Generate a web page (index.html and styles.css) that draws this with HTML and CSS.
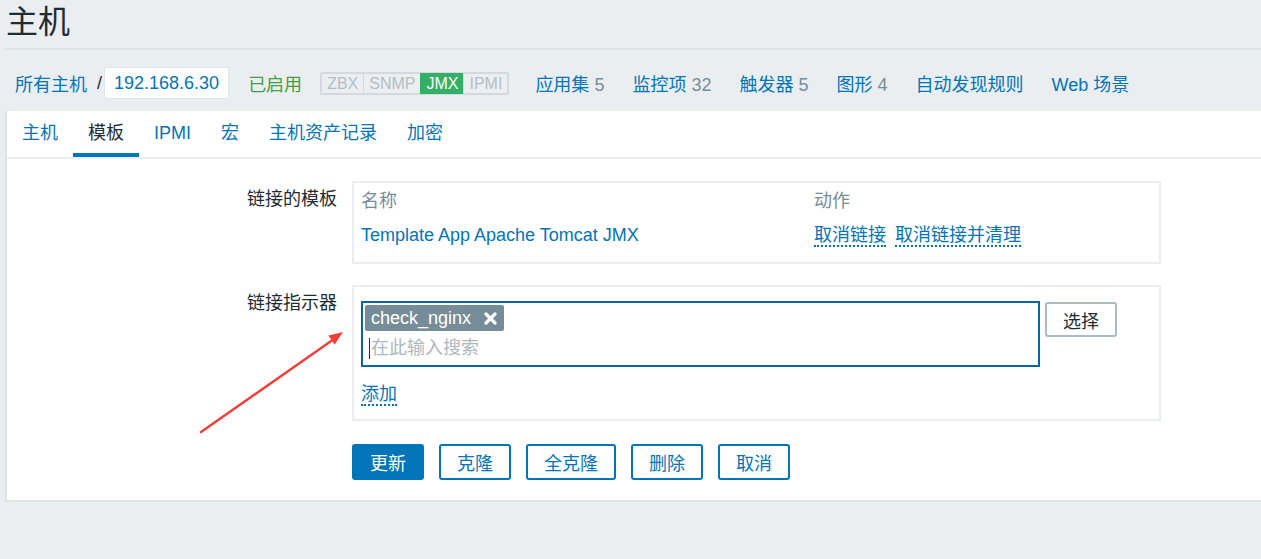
FILE: index.html
```html
<!DOCTYPE html>
<html lang="zh-CN">
<head>
<meta charset="utf-8">
<title>主机</title>
<link rel="stylesheet" href="styles.css">
</head>
<body>
<header class="page-header"><h1 class="title">主机</h1></header>
<nav class="crumbs">
  <a class="link">所有主机</a><span class="sep">/</span><span class="host-box">192.168.6.30</span>
  <span class="status-on">已启用</span>
  <span class="badges"><span class="badge">ZBX</span><span class="badge">SNMP</span><span class="badge badge-on">JMX</span><span class="badge">IPMI</span></span>
  <span class="nav-links">
    <a class="link">应用集 <span class="count">5</span></a>
    <a class="link">监控项 <span class="count">32</span></a>
    <a class="link">触发器 <span class="count">5</span></a>
    <a class="link">图形 <span class="count">4</span></a>
    <a class="link">自动发现规则</a>
    <a class="link">Web 场景</a>
  </span>
</nav>
<main class="panel">
  <ul class="tabs">
    <li class="tab">主机</li>
    <li class="tab tab-active">模板</li>
    <li class="tab">IPMI</li>
    <li class="tab">宏</li>
    <li class="tab">主机资产记录</li>
    <li class="tab">加密</li>
  </ul>
  <form class="form">
    <div class="form-row">
      <div class="form-label">链接的模板</div>
      <div class="field-box tpl-table">
        <div class="th">名称</div>
        <div class="th">动作</div>
        <div class="td"><a class="link">Template App Apache Tomcat JMX</a></div>
        <div class="td"><a class="link dotted">取消链接</a> <a class="link dotted link-next">取消链接并清理</a></div>
      </div>
    </div>
    <div class="form-row form-row-gap">
      <div class="form-label">链接指示器</div>
      <div class="field-box link-box">
        <div class="ms-row">
          <div class="multiselect">
            <span class="ms-tag">check_nginx<svg class="ms-x" width="13" height="13" viewBox="0 0 13 13"><path d="M2 2 L11 11 M11 2 L2 11" stroke="#fff" stroke-width="3.2" stroke-linecap="round"/></svg></span>
            <div class="ms-input"><span class="caret"></span>在此输入搜索</div>
          </div>
          <button type="button" class="btn-select">选择</button>
        </div>
        <div class="add-row"><a class="link dotted">添加</a></div>
      </div>
    </div>
    <div class="form-actions">
      <div></div>
      <div class="buttons">
        <button type="button" class="btn btn-primary">更新</button>
        <button type="button" class="btn">克隆</button>
        <button type="button" class="btn">全克隆</button>
        <button type="button" class="btn">删除</button>
        <button type="button" class="btn">取消</button>
      </div>
    </div>
  </form>
</main>
<svg class="annotation" width="1261" height="559" viewBox="0 0 1261 559">
  <line x1="201" y1="432" x2="334" y2="339" stroke="#f23d3a" stroke-width="2.4" stroke-linecap="round"/>
  <polygon points="343,332 334.6,344.4 328.4,335.6" fill="#f23d3a"/>
</svg>
</body>
</html>
```
FILE: styles.css
```css
html, body {
  margin: 0;
  padding: 0;
}
body {
  background: #ebeef0;
  font-family: "Liberation Sans", "Noto Sans CJK SC", sans-serif;
  font-size: 18px;
  color: #1f2c33;
  position: relative;
  width: 1261px;
  height: 559px;
  overflow: hidden;
}
.link {
  color: #0275b8;
  text-decoration: none;
}
.dotted {
  border-bottom: 2px dotted #0275b8;
}
.link-next {
  margin-left: 4px;
}
.page-header {
  margin-left: 5px;
  border-bottom: 2px solid #dde2e5;
}
.title {
  margin: 0;
  padding-left: 1px;
  height: 48px;
  font-size: 32px;
  font-weight: normal;
  line-height: 45px;
  color: #1f2c33;
}
.crumbs {
  display: flex;
  align-items: center;
  height: 32px;
  padding: 17px 0 12px 15px;
}
.sep {
  margin: 0 2px 0 10px;
  color: #1f2c33;
}
.host-box {
  box-sizing: border-box;
  height: 32px;
  line-height: 30px;
  padding: 0 9px;
  background: #fff;
  border: 1px solid #e0e5e8;
  border-radius: 2px;
  color: #0275b8;
}
.status-on {
  margin-left: 19px;
  color: #429e47;
}
.badges {
  display: flex;
  margin-left: 18px;
  border: 1px solid #d3d9dc;
  border-radius: 2px;
}
.badge {
  border: 1px solid #d3d9dc;
  margin-left: -1px;
  padding: 0 5px;
  line-height: 19px;
  font-size: 16px;
  color: #b4bec3;
  background: #eceff1;
}
.badge:first-child {
  margin-left: 0;
}
.badge-on {
  background: #34af67;
  border-color: #34af67;
  color: #fff;
}
.nav-links {
  display: flex;
  gap: 28px;
  margin-left: 26px;
}
.count {
  color: #768d99;
}
.panel {
  margin-left: 5px;
  background: #fff;
  border-left: 2px solid #dfe4e7;
  border-bottom: 2px solid #dfe4e7;
}
.tabs {
  display: flex;
  list-style: none;
  margin: 0;
  padding: 0;
  height: 46px;
  border-bottom: 2px solid #ebeef0;
}
.tab {
  height: 46px;
  line-height: 44px;
  padding: 0 15px;
  color: #0275b8;
}
.tab-active {
  color: #1f2c33;
  box-shadow: inset 0 -4px 0 #0275b8;
}
.form {
  padding: 22px 0 20px;
}
.form-row {
  display: grid;
  grid-template-columns: 345px 809px;
}
.form-row-gap {
  margin-top: 21px;
}
.form-label {
  text-align: right;
  padding: 6px 15px 0 0;
  line-height: 24px;
  color: #1f2c33;
}
.field-box {
  box-sizing: border-box;
  border: 2px solid #ebeef0;
}
.tpl-table {
  display: grid;
  grid-template-columns: 453px auto;
  padding: 0 7px 11px;
}
.th {
  line-height: 36px;
  color: #768d99;
}
.td {
  line-height: 32px;
}
.link-box {
  padding: 14px 7px 13px;
}
.ms-row {
  display: flex;
  align-items: flex-start;
}
.multiselect {
  box-sizing: border-box;
  width: 679px;
  height: 66px;
  border: 2px solid #0b65a3;
  padding: 2px;
}
.ms-tag {
  display: inline-flex;
  align-items: center;
  height: 26px;
  line-height: 26px;
  padding: 0 7px 0 6px;
  background: #768d99;
  color: #fff;
  border-radius: 2px;
  vertical-align: top;
}
.ms-x {
  margin-left: 13px;
}
.ms-input {
  display: flex;
  align-items: center;
  height: 34px;
  line-height: 34px;
  padding-left: 4px;
  color: #acb8be;
}
.caret {
  display: inline-block;
  width: 1px;
  height: 21px;
  background: #1f2c33;
  margin-right: 1px;
}
.btn-select {
  box-sizing: border-box;
  margin: 1px 0 0 5px;
  width: 72px;
  height: 35px;
  padding: 0;
  border: 2px solid #acbbc2;
  border-radius: 3px;
  background: #fff;
  font: inherit;
  color: #1f2c33;
}
.add-row {
  margin-top: 15px;
  line-height: 24px;
}
.form-actions {
  display: grid;
  grid-template-columns: 345px auto;
  margin-top: 23px;
}
.buttons {
  display: flex;
  gap: 15px;
}
.btn {
  box-sizing: border-box;
  height: 36px;
  min-width: 72px;
  padding: 0 16px;
  border: 2px solid #0275b8;
  border-radius: 3px;
  background: #fff;
  color: #0275b8;
  font: inherit;
}
.btn-primary {
  background: #0275b8;
  color: #fff;
}
.annotation {
  position: absolute;
  left: 0;
  top: 0;
  pointer-events: none;
}
```
